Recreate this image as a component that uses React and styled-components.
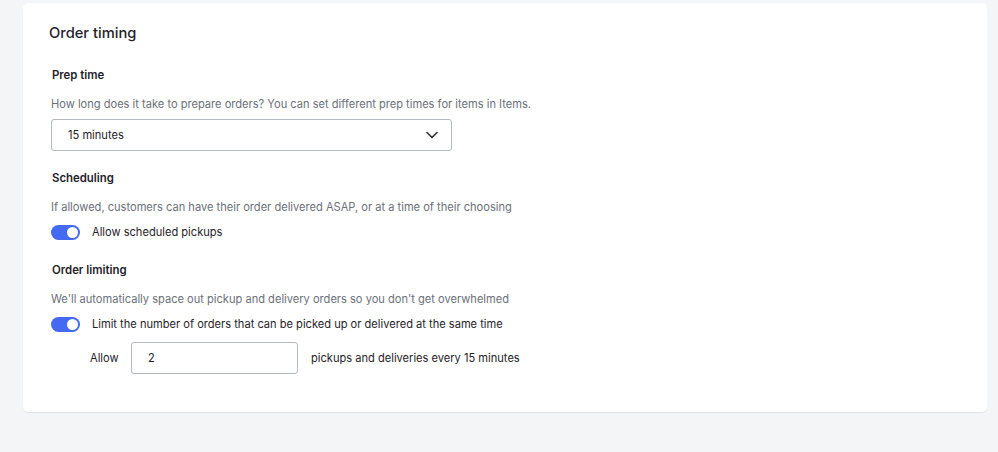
import React, { useState } from 'react';
import styled, { createGlobalStyle } from 'styled-components';

const GlobalStyle = createGlobalStyle`
  html, body {
    margin: 0;
    padding: 0;
    background: #f4f5f7;
    font-family: Inter, "Noto Sans", Arial, sans-serif;
    color: #1f2329;
  }
`;

const Page = styled.div`
  padding: 3px 11px 0 23px;
  height: 452px;
  box-sizing: border-box;
`;

const Card = styled.section`
  background: #fff;
  border-radius: 5px;
  box-shadow: 0 1px 1px rgba(0, 0, 0, 0.08);
  height: 409px;
  box-sizing: border-box;
  padding: 21px 26px 0 26px;
`;

const Title = styled.h2`
  margin: 0 0 25px 0;
  font-size: 14.7px;
  font-weight: 500;
  line-height: 18px;
  color: #1f2329;
`;

const Section = styled.div`
  padding-left: 2px;
  margin-bottom: ${(p) => p.gap || 0}px;
`;

const Label = styled.div`
  font-size: 11.4px;
  font-weight: 600;
  line-height: 16px;
  color: #1f2329;
  margin-left: 1px;
  margin-bottom: 13px;
`;

const Desc = styled.p`
  margin: 0 0 ${(p) => p.space || 7}px 0;
  font-size: 11.1px;
  line-height: 16px;
  color: #6b7079;
`;

const Select = styled.div`
  width: 401px;
  height: 32px;
  box-sizing: border-box;
  border: 1px solid #b5b9c0;
  border-radius: 3px;
  display: flex;
  align-items: center;
  justify-content: space-between;
  padding: 0 12px 0 16px;
  font-size: 11.1px;
  color: #1f2329;
`;

const ToggleRow = styled.label`
  display: flex;
  align-items: center;
  gap: 12px;
  font-size: 11.1px;
  line-height: 16px;
  color: #1f2329;
  cursor: pointer;
`;

const Track = styled.span`
  width: 29px;
  height: 15px;
  border-radius: 8px;
  background: ${(p) => (p.on ? '#4469f2' : '#c4c8ce')};
  position: relative;
  flex-shrink: 0;
`;

const Knob = styled.span`
  position: absolute;
  top: 2px;
  left: ${(p) => (p.on ? '16px' : '2px')};
  width: 11px;
  height: 11px;
  border-radius: 50%;
  background: #fff;
`;

const AllowRow = styled.div`
  display: flex;
  align-items: center;
  margin-top: 10px;
  padding-left: 39px;
  font-size: 11.1px;
  color: #1f2329;
`;

const AllowText = styled.span`
  width: 41px;
`;

const NumberInput = styled.input`
  width: 167px;
  height: 32px;
  box-sizing: border-box;
  border: 1px solid #b5b9c0;
  border-radius: 3px;
  padding: 0 16px;
  font-family: inherit;
  font-size: 11.1px;
  color: #1f2329;
  margin-right: 13px;
  outline: none;
`;

const Chevron = () => (
  <svg width="14" height="14" viewBox="0 0 14 14" fill="none">
    <path d="M2 4.5 L7 9.5 L12 4.5" stroke="#2a2f36" strokeWidth="1.6" strokeLinecap="round" strokeLinejoin="round" />
  </svg>
);

const Toggle = ({ on, onClick, children }) => (
  <ToggleRow onClick={onClick}>
    <Track on={on}>
      <Knob on={on} />
    </Track>
    {children}
  </ToggleRow>
);

export default function App() {
  const [scheduled, setScheduled] = useState(true);
  const [limit, setLimit] = useState(true);
  const [count, setCount] = useState('2');

  return (
    <Page>
      <GlobalStyle />
      <Card>
        <Title>Order timing</Title>

        <Section gap={19}>
          <Label>Prep time</Label>
          <Desc>How long does it take to prepare orders? You can set different prep times for items in Items.</Desc>
          <Select>
            <span>15 minutes</span>
            <Chevron />
          </Select>
        </Section>

        <Section gap={22}>
          <Label>Scheduling</Label>
          <Desc space={9}>If allowed, customers can have their order delivered ASAP, or at a time of their choosing</Desc>
          <Toggle on={scheduled} onClick={() => setScheduled(!scheduled)}>
            Allow scheduled pickups
          </Toggle>
        </Section>

        <Section>
          <Label>Order limiting</Label>
          <Desc space={9}>We'll automatically space out pickup and delivery orders so you don't get overwhelmed</Desc>
          <Toggle on={limit} onClick={() => setLimit(!limit)}>
            Limit the number of orders that can be picked up or delivered at the same time
          </Toggle>
          <AllowRow>
            <AllowText>Allow</AllowText>
            <NumberInput value={count} onChange={(e) => setCount(e.target.value)} />
            <span>pickups and deliveries every 15 minutes</span>
          </AllowRow>
        </Section>
      </Card>
    </Page>
  );
}
